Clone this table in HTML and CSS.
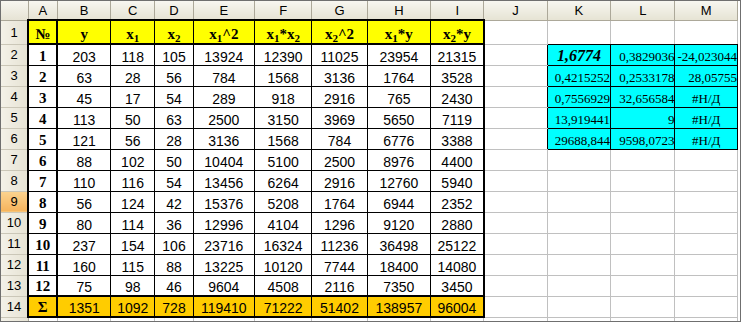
FILE: index.html
```html
<!DOCTYPE html>
<html lang="ru">
<head>
<meta charset="utf-8">
<title>Лист Excel</title>
<link rel="stylesheet" href="styles.css">
</head>
<body>
<div class="frame">
<table class="sheet">
<colgroup>
<col class="w-rh"><col class="w-a"><col class="w-b"><col class="w-c"><col class="w-d"><col class="w-e"><col class="w-f"><col class="w-g"><col class="w-h"><col class="w-i"><col class="w-j"><col class="w-k"><col class="w-l"><col class="w-m">
</colgroup>
<thead>
<tr class="colhdr">
<th class="corner"></th><th>A</th><th>B</th><th>C</th><th>D</th><th>E</th><th>F</th><th>G</th><th>H</th><th>I</th><th>J</th><th>K</th><th>L</th><th>M</th>
</tr>
</thead>
<tbody>
<tr class="r1">
<td class="rh">1</td>
<td class="hd ca">№</td>
<td class="hd">y</td>
<td class="hd">x<sub>1</sub></td>
<td class="hd">x<sub>2</sub></td>
<td class="hd">x<sub>1</sub>^2</td>
<td class="hd">x<sub>1</sub>*x<sub>2</sub></td>
<td class="hd">x<sub>2</sub>^2</td>
<td class="hd">x<sub>1</sub>*y</td>
<td class="hd ci">x<sub>2</sub>*y</td>
<td class="g"></td><td class="g kb"></td><td class="g kb"></td><td class="g kb"></td>
</tr>
<tr class="r">
<td class="rh">2</td><td class="d ca num">1</td><td class="d">203</td><td class="d">118</td><td class="d">105</td><td class="d">13924</td><td class="d">12390</td><td class="d">11025</td><td class="d">23954</td><td class="d ci">21315</td>
<td class="g jb"></td><td class="cy big">1,6774</td><td class="cy">0,3829036</td><td class="cy">-24,023044</td>
</tr>
<tr class="r">
<td class="rh">3</td><td class="d ca num">2</td><td class="d">63</td><td class="d">28</td><td class="d">56</td><td class="d">784</td><td class="d">1568</td><td class="d">3136</td><td class="d">1764</td><td class="d ci">3528</td>
<td class="g jb"></td><td class="cy">0,4215252</td><td class="cy">0,2533178</td><td class="cy">28,05755</td>
</tr>
<tr class="r">
<td class="rh">4</td><td class="d ca num">3</td><td class="d">45</td><td class="d">17</td><td class="d">54</td><td class="d">289</td><td class="d">918</td><td class="d">2916</td><td class="d">765</td><td class="d ci">2430</td>
<td class="g jb"></td><td class="cy">0,7556929</td><td class="cy">32,656584</td><td class="cy err">#Н/Д</td>
</tr>
<tr class="r">
<td class="rh">5</td><td class="d ca num">4</td><td class="d">113</td><td class="d">50</td><td class="d">63</td><td class="d">2500</td><td class="d">3150</td><td class="d">3969</td><td class="d">5650</td><td class="d ci">7119</td>
<td class="g jb"></td><td class="cy">13,919441</td><td class="cy">9</td><td class="cy err">#Н/Д</td>
</tr>
<tr class="r">
<td class="rh">6</td><td class="d ca num">5</td><td class="d">121</td><td class="d">56</td><td class="d">28</td><td class="d">3136</td><td class="d">1568</td><td class="d">784</td><td class="d">6776</td><td class="d ci">3388</td>
<td class="g jb"></td><td class="cy">29688,844</td><td class="cy">9598,0723</td><td class="cy err">#Н/Д</td>
</tr>
<tr class="r">
<td class="rh">7</td><td class="d ca num">6</td><td class="d">88</td><td class="d">102</td><td class="d">50</td><td class="d">10404</td><td class="d">5100</td><td class="d">2500</td><td class="d">8976</td><td class="d ci">4400</td>
<td class="g"></td><td class="g"></td><td class="g"></td><td class="g"></td>
</tr>
<tr class="r">
<td class="rh">8</td><td class="d ca num">7</td><td class="d">110</td><td class="d">116</td><td class="d">54</td><td class="d">13456</td><td class="d">6264</td><td class="d">2916</td><td class="d">12760</td><td class="d ci">5940</td>
<td class="g"></td><td class="g"></td><td class="g"></td><td class="g"></td>
</tr>
<tr class="r">
<td class="rh sel">9</td><td class="d ca num">8</td><td class="d">56</td><td class="d">124</td><td class="d">42</td><td class="d">15376</td><td class="d">5208</td><td class="d">1764</td><td class="d">6944</td><td class="d ci">2352</td>
<td class="g"></td><td class="g"></td><td class="g"></td><td class="g"></td>
</tr>
<tr class="r">
<td class="rh">10</td><td class="d ca num">9</td><td class="d">80</td><td class="d">114</td><td class="d">36</td><td class="d">12996</td><td class="d">4104</td><td class="d">1296</td><td class="d">9120</td><td class="d ci">2880</td>
<td class="g"></td><td class="g"></td><td class="g"></td><td class="g"></td>
</tr>
<tr class="r">
<td class="rh">11</td><td class="d ca num">10</td><td class="d">237</td><td class="d">154</td><td class="d">106</td><td class="d">23716</td><td class="d">16324</td><td class="d">11236</td><td class="d">36498</td><td class="d ci">25122</td>
<td class="g"></td><td class="g"></td><td class="g"></td><td class="g"></td>
</tr>
<tr class="r">
<td class="rh">12</td><td class="d ca num">11</td><td class="d">160</td><td class="d">115</td><td class="d">88</td><td class="d">13225</td><td class="d">10120</td><td class="d">7744</td><td class="d">18400</td><td class="d ci">14080</td>
<td class="g"></td><td class="g"></td><td class="g"></td><td class="g"></td>
</tr>
<tr class="r">
<td class="rh">13</td><td class="d ca num">12</td><td class="d">75</td><td class="d">98</td><td class="d">46</td><td class="d">9604</td><td class="d">4508</td><td class="d">2116</td><td class="d">7350</td><td class="d ci">3450</td>
<td class="g"></td><td class="g"></td><td class="g"></td><td class="g"></td>
</tr>
<tr class="r sum">
<td class="rh">14</td><td class="d ca num">Σ</td><td class="d">1351</td><td class="d">1092</td><td class="d">728</td><td class="d">119410</td><td class="d">71222</td><td class="d">51402</td><td class="d">138957</td><td class="d ci">96004</td>
<td class="g"></td><td class="g"></td><td class="g"></td><td class="g"></td>
</tr>
<tr class="r">
<td class="rh"></td><td class="g"></td><td class="g"></td><td class="g"></td><td class="g"></td><td class="g"></td><td class="g"></td><td class="g"></td><td class="g"></td><td class="g"></td><td class="g"></td><td class="g"></td><td class="g"></td><td class="g"></td>
</tr>
</tbody>
</table>
</div>
</body>
</html>
```
FILE: styles.css
```css
html, body {
  margin: 0;
  padding: 0;
  background: #ffffff;
}

.frame {
  width: 741px;
  height: 322px;
  box-sizing: border-box;
  border: 1px solid #6f6f6f;
  overflow: hidden;
  background: #ffffff;
}

.sheet {
  border-collapse: collapse;
  table-layout: fixed;
  width: 737px;
}

.w-rh { width: 27px; }
.w-a { width: 29px; }
.w-b { width: 53px; }
.w-c { width: 44px; }
.w-d { width: 38px; }
.w-e { width: 61px; }
.w-f { width: 57px; }
.w-g { width: 55px; }
.w-h { width: 63px; }
.w-i { width: 53px; }
.w-j { width: 63px; }
.w-k { width: 63px; }
.w-l { width: 64px; }
.w-m { width: 62px; }

.sheet th,
.sheet td {
  padding: 0;
  overflow: hidden;
  white-space: nowrap;
}

/* column header strip */
.colhdr th {
  height: 18px;
  background: linear-gradient(#f7f6f0, #e6e3d4);
  border-right: 1px solid #aca899;
  border-bottom: 1px solid #aca899;
  font: 13px "Liberation Sans", Arial, sans-serif;
  font-weight: normal;
  color: #000;
  text-align: center;
  vertical-align: middle;
}

/* row headers */
.rh {
  background: linear-gradient(90deg, #f3f1e8, #e6e3d4);
  border-right: 1px solid #aca899;
  border-bottom: 1px solid #cbc7b8;
  font: 13px "Liberation Sans", Arial, sans-serif;
  color: #000;
  text-align: center;
  vertical-align: middle;
}

.rh.sel {
  background: linear-gradient(#fbd38f, #f5b35c);
}

.r1 { height: 24px; }
.r { height: 21px; }

/* gridline cells */
.g {
  border: 1px solid #c0c0c0;
}
.g.jb { border-right-color: #000; }
.g.kb { border-bottom-color: #000; }

/* data table */
.d {
  border: 1px solid #000;
  font: 14px "Liberation Sans", Arial, sans-serif;
  text-align: center;
  vertical-align: bottom;
  padding-bottom: 1px;
  color: #000;
}

.hd {
  background: #ffff00;
  border: 1px solid #000;
  border-top: 2px solid #000;
  border-bottom: 2px solid #000;
  font: bold 15px "Liberation Serif", "Times New Roman", serif;
  text-align: center;
  vertical-align: bottom;
  padding-bottom: 2px;
}

.hd sub {
  font-size: 11px;
  vertical-align: -3px;
  line-height: 0;
}

.ca {
  border-left: 2px solid #000;
  border-right: 2px solid #000;
}

.ci {
  border-right: 2px solid #000;
}

.d.num {
  font: bold 15px "Liberation Serif", "Times New Roman", serif;
}

.sum .d {
  background: #ffcc00;
  border-top: 2px solid #000;
  border-bottom: 2px solid #000;
}

/* regression output block */
.cy {
  background: #00ffff;
  border: 1px solid #000;
  font: 13px "Liberation Serif", "Times New Roman", serif;
  text-align: right;
  vertical-align: bottom;
  padding: 0 1px 2px 0;
  color: #000;
}

.cy.big {
  font: bold italic 16px "Liberation Serif", "Times New Roman", serif;
  text-align: center;
  padding-right: 0;
}

.cy.err {
  text-align: center;
  padding-right: 0;
}
```
